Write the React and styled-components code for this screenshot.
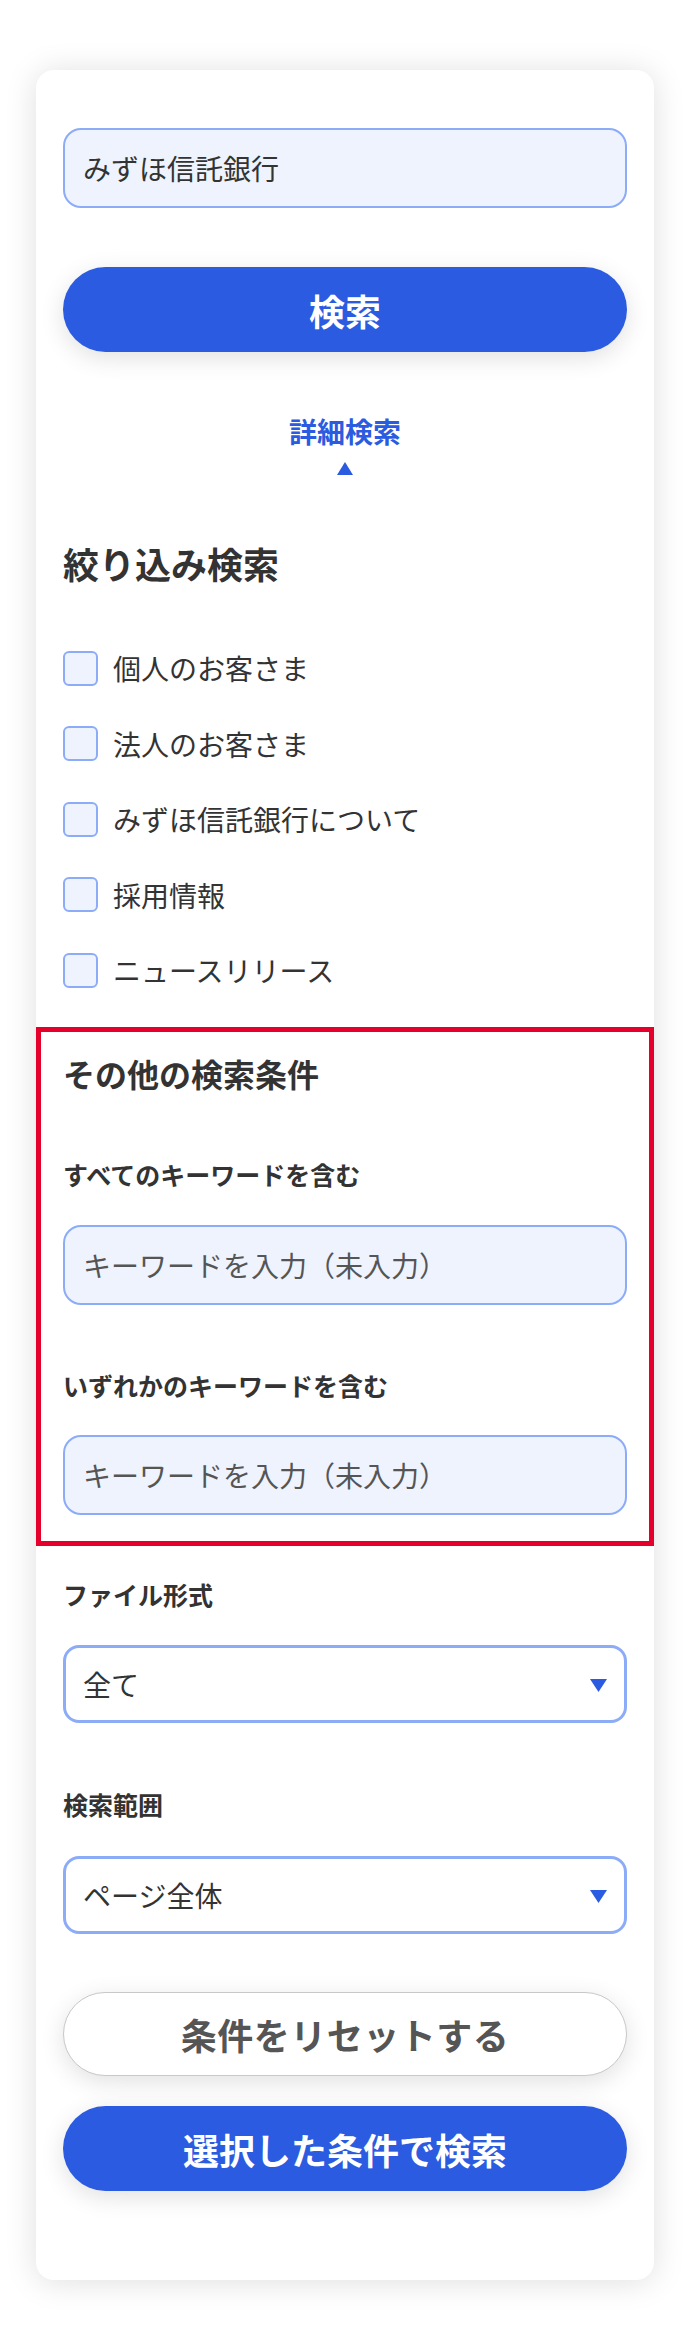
import React from "react";
import styled, { createGlobalStyle } from "styled-components";

const BLUE = "#2a5be0";
const LIGHT_BORDER = "#8cacf8";
const LIGHT_BG = "#eef3fe";
const TEXT = "#333333";

const Global = createGlobalStyle`
  html, body {
    margin: 0;
    padding: 0;
    background: #ffffff;
  }
  body {
    font-family: "Noto Sans CJK JP", "Noto Sans", sans-serif;
    color: ${TEXT};
  }
  * { box-sizing: border-box; }
`;

const Page = styled.div`
  width: 690px;
  padding: 70px 36px 68px;
`;

const Card = styled.div`
  width: 618px;
  background: #fff;
  border-radius: 18px;
  box-shadow: 0 2px 32px rgba(0, 0, 0, 0.13);
  padding: 58px 0 89px;
  display: flex;
  flex-direction: column;
`;

const Section = styled.div`
  padding: 0 27px;
  display: flex;
  flex-direction: column;
`;

const TextInput = styled.input`
  display: block;
  width: 100%;
  height: ${(p) => p.$h || 80}px;
  margin-top: ${(p) => p.$mt || 0}px;
  border: 2px solid ${LIGHT_BORDER};
  border-radius: 18px;
  background: ${LIGHT_BG};
  padding: 0 18px;
  font-family: inherit;
  font-size: 28px;
  color: ${TEXT};
  outline: none;
  &::placeholder {
    color: #555;
  }
`;

const PillButton = styled.button`
  display: flex;
  align-items: center;
  justify-content: center;
  width: 100%;
  height: ${(p) => p.$h || 85}px;
  margin-top: ${(p) => p.$mt || 0}px;
  border-radius: 999px;
  border: ${(p) => (p.$variant === "outline" ? "1.5px solid #c8c8c8" : "none")};
  background: ${(p) => (p.$variant === "outline" ? "#fff" : BLUE)};
  color: ${(p) => (p.$variant === "outline" ? "#555" : "#fff")};
  font-family: inherit;
  font-weight: 700;
  font-size: 36px;
  letter-spacing: ${(p) => (p.$variant === "outline" ? "0.5px" : "0")};
  box-shadow: 0 6px 24px rgba(0, 0, 0, 0.12);
  cursor: pointer;
  padding: 0;
`;

const DetailToggle = styled.div`
  margin-top: 59px;
  display: flex;
  flex-direction: column;
  align-items: center;
  color: ${BLUE};
  font-weight: 700;
  font-size: 28px;
  line-height: 40px;
`;

const ToggleArrow = styled.svg`
  display: block;
  margin-top: 11px;
  width: 16px;
  height: 13px;
`;

const Heading = styled.h2`
  margin: ${(p) => p.$mt || 0}px 0 0;
  font-size: ${(p) => p.$size || 36}px;
  line-height: ${(p) => p.$lh || 50}px;
  font-weight: 700;
  color: ${TEXT};
`;

const CheckList = styled.div`
  margin-top: 62px;
  display: flex;
  flex-direction: column;
  gap: 39.5px;
`;

const CheckRow = styled.label`
  display: flex;
  align-items: center;
  gap: 15px;
  height: 36px;
  font-size: 28px;
  color: ${TEXT};
`;

const CheckBox = styled.input.attrs({ type: "checkbox" })`
  appearance: none;
  -webkit-appearance: none;
  margin: 0;
  width: 35px;
  height: 35px;
  border: 2px solid ${LIGHT_BORDER};
  border-radius: 6px;
  background: ${LIGHT_BG};
  flex-shrink: 0;
`;

const RedBox = styled.div`
  margin-top: 39px;
  border: 5px solid #e4002b;
  padding: 19px 22px 26px;
  display: flex;
  flex-direction: column;
`;

const FieldLabel = styled.div`
  margin-top: ${(p) => p.$mt || 0}px;
  font-size: 25px;
  line-height: 36px;
  font-weight: 700;
  color: ${TEXT};
`;

const SelectBox = styled.div`
  margin-top: ${(p) => p.$mt || 0}px;
  height: 78px;
  border: 3px solid ${LIGHT_BORDER};
  border-radius: 16px;
  background: #fff;
  display: flex;
  align-items: center;
  justify-content: space-between;
  padding: 0 17px 0 17px;
  font-size: 28px;
  color: ${TEXT};
`;

const SelectArrow = styled.svg`
  display: block;
  width: 17px;
  height: 13px;
  margin-top: 2px;
`;

const checks = [
  "個人のお客さま",
  "法人のお客さま",
  "みずほ信託銀行について",
  "採用情報",
  "ニュースリリース",
];

function Select({ value, mt }) {
  return (
    <SelectBox $mt={mt}>
      <span>{value}</span>
      <SelectArrow viewBox="0 0 17 13">
        <polygon points="0,0 17,0 8.5,13" fill={BLUE} />
      </SelectArrow>
    </SelectBox>
  );
}

export default function App() {
  return (
    <>
      <Global />
      <Page>
        <Card>
          <Section>
            <TextInput defaultValue="みずほ信託銀行" />
            <PillButton $mt={59}>検索</PillButton>
            <DetailToggle>
              <span>詳細検索</span>
              <ToggleArrow viewBox="0 0 16 13">
                <polygon points="8,0 16,13 0,13" fill={BLUE} />
              </ToggleArrow>
            </DetailToggle>
            <Heading $mt={63}>絞り込み検索</Heading>
            <CheckList>
              {checks.map((c) => (
                <CheckRow key={c}>
                  <CheckBox />
                  <span>{c}</span>
                </CheckRow>
              ))}
            </CheckList>
          </Section>

          <RedBox>
            <Heading $size={32} $lh={44}>
              その他の検索条件
            </Heading>
            <FieldLabel $mt={61}>すべてのキーワードを含む</FieldLabel>
            <TextInput $mt={33} placeholder="キーワードを入力（未入力）" />
            <FieldLabel $mt={62}>いずれかのキーワードを含む</FieldLabel>
            <TextInput $mt={32} placeholder="キーワードを入力（未入力）" />
          </RedBox>

          <Section>
            <FieldLabel $mt={30}>ファイル形式</FieldLabel>
            <Select value="全て" mt={33} />
            <FieldLabel $mt={63}>検索範囲</FieldLabel>
            <Select value="ページ全体" mt={34} />
            <PillButton $variant="outline" $h={84} $mt={58}>
              条件をリセットする
            </PillButton>
            <PillButton $mt={30}>選択した条件で検索</PillButton>
          </Section>
        </Card>
      </Page>
    </>
  );
}
